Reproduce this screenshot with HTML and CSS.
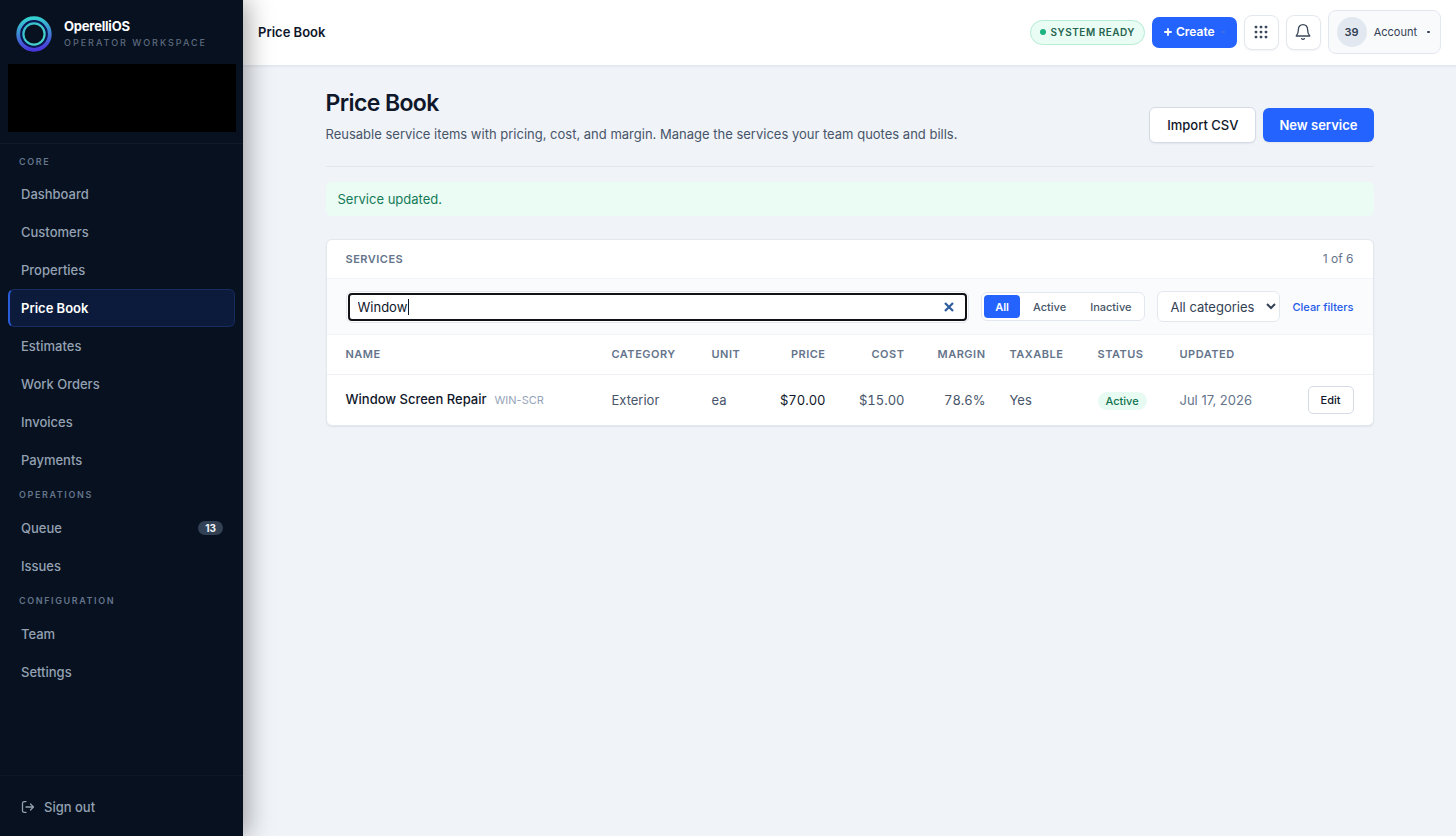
FILE: index.html
```html
<!DOCTYPE html>
<html lang="en">
<head>
<meta charset="utf-8">
<meta name="viewport" content="width=device-width, initial-scale=1">
<title>Price Book</title>
<link rel="stylesheet" href="styles.css">
</head>
<body>
<div class="app">
  <aside class="sidebar">
    <div class="brand">
      <svg class="brand-logo" viewBox="0 0 36 36" aria-hidden="true">
        <defs>
          <linearGradient id="ring" x1="0.5" y1="0" x2="0.6" y2="1">
            <stop offset="0" stop-color="#35cfd0"/>
            <stop offset="0.5" stop-color="#3f80d4"/>
            <stop offset="1" stop-color="#4a36dc"/>
          </linearGradient>
          <linearGradient id="inner" x1="0" y1="0" x2="1" y2="1">
            <stop offset="0" stop-color="#35bccb"/>
            <stop offset="1" stop-color="#48d8cb"/>
          </linearGradient>
        </defs>
        <circle cx="18" cy="18" r="15.8" fill="#0a1552" stroke="url(#ring)" stroke-width="3.800"/>
        <circle cx="18" cy="18" r="10.600" fill="#07111f" stroke="url(#inner)" stroke-width="2.200"/>
      </svg>
      <div class="brand-text">
        <span class="brand-name">OperelliOS</span>
        <span class="brand-sub">OPERATOR WORKSPACE</span>
      </div>
    </div>
    <div class="workspace"></div>
    <nav class="nav">
      <h2 class="nav-label">CORE</h2>
      <a class="nav-item" href="#">Dashboard</a>
      <a class="nav-item" href="#">Customers</a>
      <a class="nav-item" href="#">Properties</a>
      <a class="nav-item active" href="#" aria-current="page">Price Book</a>
      <a class="nav-item" href="#">Estimates</a>
      <a class="nav-item" href="#">Work Orders</a>
      <a class="nav-item" href="#">Invoices</a>
      <a class="nav-item" href="#">Payments</a>
      <h2 class="nav-label">OPERATIONS</h2>
      <a class="nav-item" href="#">Queue <span class="count">13</span></a>
      <a class="nav-item" href="#">Issues</a>
      <h2 class="nav-label">CONFIGURATION</h2>
      <a class="nav-item" href="#">Team</a>
      <a class="nav-item" href="#">Settings</a>
    </nav>
    <div class="sidebar-foot">
      <button class="signout" type="button">
        <svg viewBox="0 0 14 14" width="14" height="14" fill="none" stroke="currentColor" stroke-width="1.3" stroke-linecap="round" stroke-linejoin="round" aria-hidden="true">
          <path d="M5 1.6H3.2A1.7 1.7 0 0 0 1.5 3.300v7.400A1.700 1.700 0 0 0 3.200 12.400H5M5 7h7.500M9.500 4l3 3-3 3"/>
        </svg>
        Sign out
      </button>
    </div>
  </aside>

  <div class="main">
    <header class="topbar">
      <span class="topbar-title">Price Book</span>
      <div class="topbar-actions">
        <span class="status"><i class="dot"></i>SYSTEM READY</span>
        <button class="create" type="button"><svg viewBox="0 0 8 8" width="8" height="8" stroke="currentColor" stroke-width="1.8" stroke-linecap="round" aria-hidden="true"><path d="M4 1v6M1 4h6"/></svg>Create<i class="speck"></i></button>
        <button class="icon-btn" type="button" aria-label="Apps">
          <svg viewBox="0 0 16 16" width="16" height="16" fill="#3b475a" aria-hidden="true">
            <rect x="1.700" y="1.700" width="2.600" height="2.600" rx="0.900"/><rect x="6.700" y="1.700" width="2.600" height="2.600" rx="0.900"/><rect x="11.700" y="1.700" width="2.600" height="2.600" rx="0.900"/>
            <rect x="1.700" y="6.700" width="2.600" height="2.600" rx="0.900"/><rect x="6.700" y="6.700" width="2.600" height="2.600" rx="0.900"/><rect x="11.700" y="6.700" width="2.600" height="2.600" rx="0.900"/>
            <rect x="1.700" y="11.700" width="2.600" height="2.600" rx="0.900"/><rect x="6.700" y="11.700" width="2.600" height="2.600" rx="0.900"/><rect x="11.700" y="11.700" width="2.600" height="2.600" rx="0.900"/>
          </svg>
        </button>
        <button class="icon-btn" type="button" aria-label="Notifications">
          <svg viewBox="0 0 18 18" width="18" height="18" fill="none" stroke="#3b475a" stroke-width="1.300" stroke-linecap="round" stroke-linejoin="round" aria-hidden="true">
            <path d="M9 1.700c-2.900 0-4.600 2-4.600 4.700 0 4.100-1.300 5.400-2.200 6.600h13.600c-.9-1.200-2.200-2.500-2.200-6.600C13.600 3.700 11.900 1.700 9 1.700z"/><path d="M7.600 15.600c.7.900 2.100.9 2.800 0"/>
          </svg>
        </button>
        <button class="account" type="button"><span class="avatar">39</span>Account<i class="speck"></i></button>
      </div>
    </header>

    <main class="content">
      <div class="page-head">
        <div>
          <h1>Price Book</h1>
          <p>Reusable service items with pricing, cost, and margin. Manage the services your team quotes and bills.</p>
        </div>
        <div class="page-actions">
          <button class="btn" type="button">Import CSV</button>
          <button class="btn primary" type="button">New service</button>
        </div>
      </div>
      <div class="notice" role="status">Service updated.</div>
      <section class="card">
        <div class="card-head"><h2>SERVICES</h2><span>1 of 6</span></div>
        <form class="filters">
          <div class="search">
            <input type="text" value="Window" aria-label="Search services">
            <span class="caret"></span>
            <button class="clear" type="button" aria-label="Clear search">
              <svg viewBox="0 0 10 10" width="10" height="10" stroke="#2f5c9c" stroke-width="2.200" aria-hidden="true"><path d="M1 1l8 8M9 1L1 9"/></svg>
            </button>
          </div>
          <div class="segments">
            <button class="segment on" type="button">All</button>
            <button class="segment" type="button">Active</button>
            <button class="segment" type="button">Inactive</button>
          </div>
          <select class="category" aria-label="Category"><option>All categories</option></select>
          <a class="clear-link" href="#">Clear filters</a>
        </form>
        <table class="table">
          <colgroup><col><col class="c-category"><col class="c-unit"><col class="c-price"><col class="c-cost"><col class="c-margin"><col class="c-taxable"><col class="c-status"><col class="c-updated"><col class="c-edit"></colgroup>
          <thead>
            <tr><th>NAME</th><th>CATEGORY</th><th>UNIT</th><th class="num">PRICE</th><th class="num">COST</th><th class="num">MARGIN</th><th>TAXABLE</th><th>STATUS</th><th>UPDATED</th><th></th></tr>
          </thead>
          <tbody>
            <tr>
              <td><span class="name">Window Screen Repair</span><span class="code">WIN-SCR</span></td>
              <td>Exterior</td><td>ea</td><td class="num price">$70.00</td><td class="num">$15.00</td><td class="num">78.6%</td><td>Yes</td>
              <td><span class="badge">Active</span></td><td class="muted">Jul 17, 2026</td><td class="num"><button class="edit" type="button">Edit</button></td>
            </tr>
          </tbody>
        </table>
      </section>
    </main>
  </div>
</div>
</body>
</html>
```
FILE: styles.css
```css
* { box-sizing: border-box; }
body { margin: 0; font-family: Inter, "Liberation Sans", sans-serif; font-size: 13px; line-height: 20px; color: #0f172a; background: #f0f3f8; }
h1, h2, p { margin: 0; }
button, input, select { font: inherit; color: inherit; margin: 0; }
button { cursor: pointer; }
a { text-decoration: none; }
.app { display: flex; min-height: 100vh; }

.sidebar { flex: 0 0 243px; height: 100vh; display: flex; flex-direction: column; background: #07111f; box-shadow: 4px 0 24px rgba(0, 0, 0, 0.36); position: sticky; top: 0; z-index: 2; }
.brand { display: flex; align-items: center; gap: 12px; height: 64px; padding: 4px 16px 0; }
.brand-logo { width: 36px; height: 36px; }
.brand-text { display: flex; flex-direction: column; padding-top: 1px; }
.brand-name { font-size: 13px; font-weight: 700; letter-spacing: -0.2px; line-height: 17px; color: #fff; }
.brand-sub { font-size: 9px; font-weight: 500; letter-spacing: 2px; line-height: 16px; color: #5c6a7e; }
.workspace { height: 68px; margin: 0 7px 11px 8px; background: #000; }
.nav { flex: 1; padding: 5px 8px; border-top: 1px solid #111c2b; display: flex; flex-direction: column; }
.nav-label { padding: 2px 11px 0; font-size: 9px; font-weight: 600; letter-spacing: 1.6px; line-height: 28px; color: #64748b; }
.nav-label:first-child { padding-top: 0; line-height: 26px; }
.nav-item { display: flex; align-items: center; justify-content: space-between; height: 38px; padding: 0 11px 0 12px; border: 1px solid transparent; border-radius: 6px; font-weight: 500; color: #94a1b3; }
.nav-item.active { background: #0c1b3c; border-color: #172c5f; border-left: 2px solid #2a5bd8; padding-left: 11px; font-weight: 600; color: #fff; }
.count { padding: 0 7px; border-radius: 7px; background: #334155; font-size: 10px; font-weight: 700; line-height: 14px; color: #f1f5f9; }
.sidebar-foot { height: 61px; padding: 12px 8px; border-top: 1px solid #0e1928; }
.signout { display: flex; align-items: center; gap: 9px; height: 38px; padding: 0 13px; border: 0; background: none; font-weight: 500; color: #94a1b3; }

.main { flex: 1; min-width: 0; }
.topbar { display: flex; align-items: center; justify-content: space-between; height: 66px; padding: 0 15px 1px; background: #fff; border-bottom: 1px solid #e3e8ef; box-shadow: 0 1px 2px rgba(15, 23, 42, 0.05); }
.topbar-title { font-size: 13px; font-weight: 600; }
.topbar-actions { display: flex; align-items: center; gap: 7px; }
.status { display: flex; align-items: center; gap: 5px; height: 25px; padding: 0 9px; border: 1px solid #b5ecd3; border-radius: 13px; background: #e9fdf4; font-size: 10px; font-weight: 600; letter-spacing: 0.5px; color: #27644f; }
.dot { width: 6px; height: 6px; border-radius: 50%; background: #1eb182; }
.create { display: flex; align-items: center; gap: 4px; height: 31px; padding: 0 12px; border: 0; border-radius: 7px; background: #2563ff; font-size: 12px; font-weight: 600; color: #fff; }
.speck { width: 3px; height: 2px; margin-left: 3px; border-radius: 1px; background: currentColor; }
.create .speck { background: #4470d8; }
.icon-btn { display: grid; place-items: center; width: 35px; height: 35px; padding: 0; border: 1px solid #e3e8ef; border-radius: 8px; background: #fff; box-shadow: 0 1px 2px rgba(15, 23, 42, 0.05); }
.account { display: flex; align-items: center; gap: 7px; height: 44px; padding: 0 10px 0 8px; border: 1px solid #e3e8f0; border-radius: 8px; background: #f8fafc; font-size: 11px; color: #334155; }
.avatar { width: 30px; height: 30px; border-radius: 50%; background: #e2e8f0; font-size: 11px; font-weight: 600; line-height: 30px; text-align: center; color: #334155; }

.content { max-width: 1080px; margin: 0 auto; padding: 22px 16px; }
.page-head { display: flex; justify-content: space-between; align-items: center; gap: 24px; padding-bottom: 22px; border-bottom: 1px solid #e2e7ee; }
.page-head h1 { font-size: 23px; font-weight: 600; line-height: 30px; letter-spacing: -0.6px; }
.page-head p { margin-top: 6px; font-size: 13px; color: #475569; }
.page-actions { display: flex; align-items: center; gap: 7px; padding-top: 18px; }
.btn { height: 36px; padding: 0 17px; border: 1px solid #d5dbe5; border-radius: 6px; background: #fff; font-size: 13px; font-weight: 500; box-shadow: 0 1px 2px rgba(15, 23, 42, 0.06); }
.btn.primary { height: 34px; padding: 0 16px; border: 0; background: #2563ff; font-weight: 600; color: #fff; }
.notice { margin: 15px 0 23px; padding: 7px 12px; border-radius: 6px; background: #eafcf4; font-size: 13px; color: #167a58; }

.card { border: 1px solid #e3e8ef; border-radius: 6px; background: #fff; overflow: hidden; box-shadow: 0 1px 2px rgba(15, 23, 42, 0.07); }
.card-head { display: flex; justify-content: space-between; align-items: center; height: 38px; padding: 0 19px; font-size: 12px; color: #64748b; }
.card-head h2 { font-size: 11px; font-weight: 600; letter-spacing: 0.5px; }
.filters { display: flex; align-items: center; gap: 12px; height: 57px; padding: 0 19px; border-top: 1px solid #f1f4f8; border-bottom: 1px solid #f1f4f8; background: #fafbfd; }
.search { position: relative; flex: 1; min-width: 0; padding: 1px; border: 1px solid #e3e8ef; border-radius: 6px; background: #fff; }
.search input { display: block; width: 100%; height: 28px; padding: 0 32px 0 8px; border: 2px solid #101217; border-radius: 4px; outline: 0; background: #fff; font-size: 13px; }
.caret { position: absolute; left: 61px; top: 7px; width: 1px; height: 16px; background: #0f172a; }
.clear { position: absolute; right: 14px; top: 10px; display: flex; padding: 0; border: 0; background: none; }
.segments { display: flex; gap: 2px; padding: 2px; border: 1px solid #e3e8ef; border-radius: 6px; background: #fff; }
.segment { height: 23px; padding: 0 11px; border: 0; border-radius: 4px; background: none; font-size: 11px; font-weight: 500; color: #475569; }
.segment.on { background: #2563ff; font-weight: 600; color: #fff; }
.category { height: 31px; width: 123px; padding: 0 0 0 8px; border: 1px solid #e3e8ef; border-radius: 6px; background: #fff; font-size: 13px; color: #334155; }
.clear-link { font-size: 11px; font-weight: 500; color: #2459e8; }

.table { width: 100%; border-collapse: collapse; table-layout: fixed; font-size: 13px; color: #475569; }
.c-category { width: 100px; }
.c-unit { width: 68px; }
.c-price { width: 70px; }
.c-cost { width: 79px; }
.c-margin { width: 81px; }
.c-taxable { width: 88px; }
.c-status { width: 82px; }
.c-updated { width: 98px; }
.c-edit { width: 107px; }
.table th { height: 39px; padding: 0 12px; border-bottom: 1px solid #eef1f6; font-size: 11px; font-weight: 600; letter-spacing: 0.5px; text-align: left; color: #64748b; }
.table td { height: 51px; padding: 0 12px; white-space: nowrap; }
.table th:first-child, .table td:first-child { padding-left: 19px; }
.table th:last-child, .table td:last-child { padding-right: 19px; }
.table .num { text-align: right; font-variant-numeric: tabular-nums; }
.name { font-weight: 500; color: #0f172a; }
.code { margin-left: 8px; font-size: 11px; color: #94a3b8; }
.table .price { color: #0f172a; }
.badge { display: inline-block; padding: 0 8px; border-radius: 9px; background: #e8fbf2; font-size: 11px; font-weight: 500; line-height: 18px; color: #11734f; }
.table .muted { color: #64748b; }
.edit { height: 28px; padding: 0 12px; border: 1px solid #d5dbe5; border-radius: 5px; background: #fff; font-size: 11px; font-weight: 500; color: #0f172a; }
```
